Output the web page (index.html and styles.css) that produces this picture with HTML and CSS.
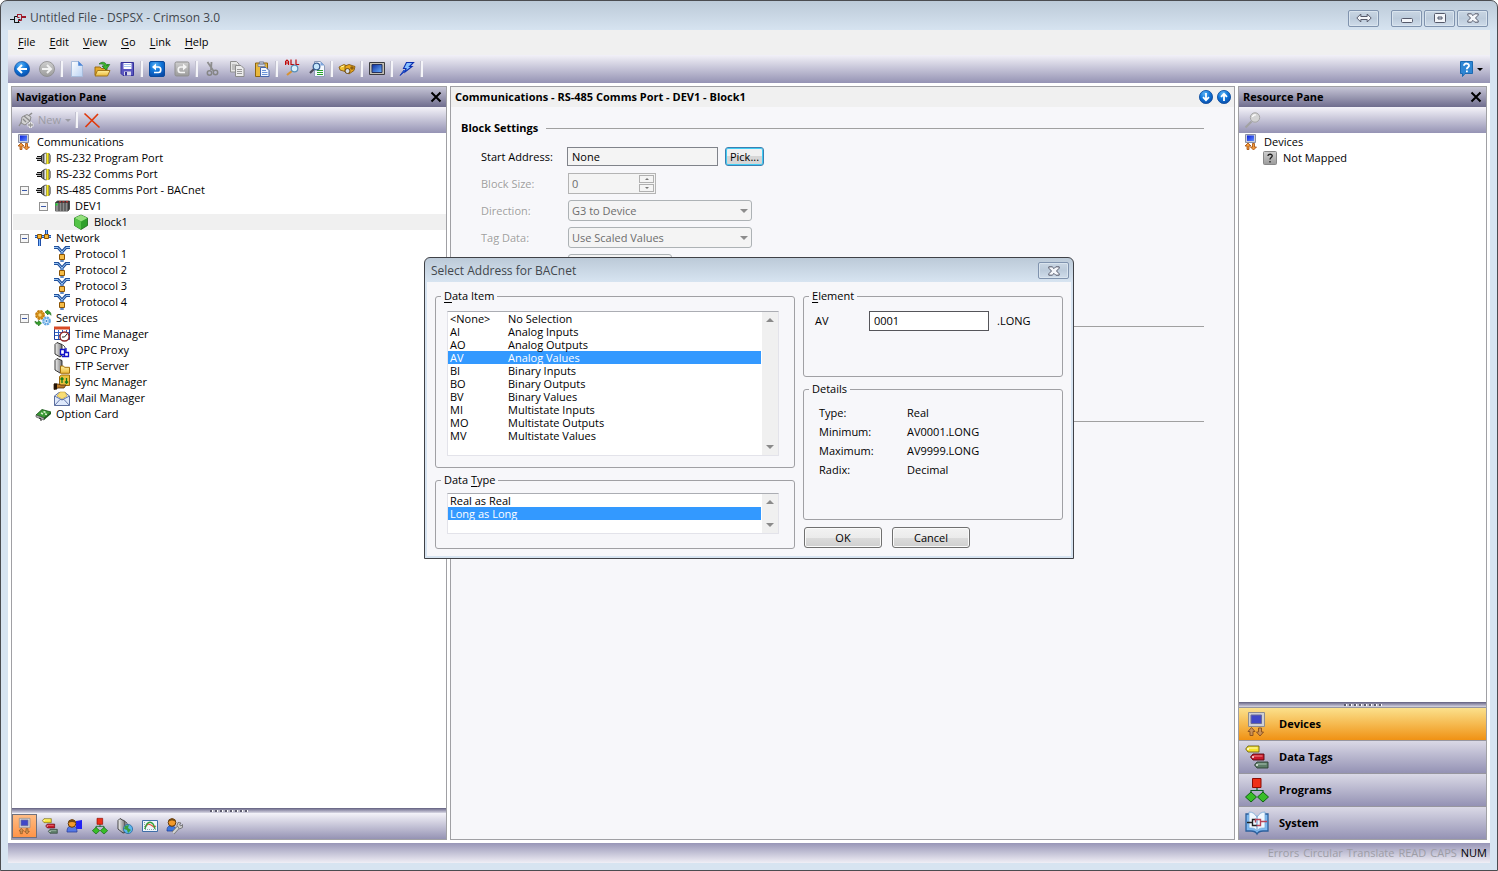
FILE: index.html
```html
<!DOCTYPE html>
<html lang="en">
<head>
<meta charset="utf-8">
<title>Untitled File - DSPSX - Crimson 3.0</title>
<link rel="stylesheet" href="styles.css">
</head>
<body>
<svg class="defs" aria-hidden="true">
  <defs>
    <radialGradient id="gBlue" cx=".4" cy=".25" r=".8"><stop offset="0" stop-color="#5db4f5"/><stop offset=".5" stop-color="#0f74d8"/><stop offset="1" stop-color="#0a4aa6"/></radialGradient>
    <linearGradient id="gGrey" x2="0" y2="1"><stop offset="0" stop-color="#cfcfcf"/><stop offset="1" stop-color="#9b9b9b"/></linearGradient>
    <linearGradient id="gScreen" x2="1" y2="1"><stop offset="0" stop-color="#0a1fd8"/><stop offset="1" stop-color="#5f8cff"/></linearGradient>
    <linearGradient id="gFolder" x2="0" y2="1"><stop offset="0" stop-color="#fff0a0"/><stop offset="1" stop-color="#eab83a"/></linearGradient>
    <linearGradient id="gPaper" x2="1" y2="1"><stop offset="0" stop-color="#ffffff"/><stop offset="1" stop-color="#b9d2f4"/></linearGradient>
    <linearGradient id="gMonitor" x2="1" y2="1"><stop offset="0" stop-color="#0c2c9c"/><stop offset="1" stop-color="#6cb2ff"/></linearGradient>
    <linearGradient id="gServer" x2="1" y2="0"><stop offset="0" stop-color="#f4f4f4"/><stop offset="1" stop-color="#777"/></linearGradient>
  </defs>
  <symbol id="i-app" viewBox="0 0 16 16"><path d="M0 9.500h5M9.500 12.500h-5v-6h3M4.500 12.500h4v-3h2" fill="none" stroke="#111"/><path d="M7 4.500h4.500v6H8M7.500 4.500v3h2M11 6.500h5M11 7.500h5" fill="none" stroke="#a01828"/></symbol>
  <symbol id="i-back" viewBox="0 0 16 16"><circle cx="8" cy="8" r="7.600" fill="url(#gBlue)" stroke="#0b4a9c" stroke-width=".6"/><path d="M13 8H4M8 4L4 8l4 4" fill="none" stroke="#fff" stroke-width="2"/></symbol>
  <symbol id="i-fwd" viewBox="0 0 16 16"><circle cx="8" cy="8" r="7.500" fill="url(#gGrey)" stroke="#8a8a8a" stroke-width=".8"/><path d="M3 8h9M8 4l4 4-4 4" fill="none" stroke="#f2f2f2" stroke-width="2"/></symbol>
  <symbol id="i-new" viewBox="0 0 16 16"><path d="M2.500.5h7l4 4v11h-11z" fill="url(#gPaper)" stroke="#a8bddc"/><path d="M9.500.5v4h4z" fill="#4c86d8" stroke="#5b8fd8" stroke-width=".7"/></symbol>
  <symbol id="i-open" viewBox="0 0 16 16"><path d="M1 6h5l1.500 1.500H13V14H1z" fill="#e5a92a" stroke="#94650a" stroke-width=".9"/><path d="M3.500 9.500H16L13.500 15H1z" fill="url(#gFolder)" stroke="#9a6d12" stroke-width=".9"/><path d="M5 3c3-3 7-2 8 2V3.500h2.700L12 9 8 5h2.300C10 3.500 8 2.500 5 3z" fill="#3bb52e" stroke="#17701a" stroke-width=".7"/></symbol>
  <symbol id="i-save" viewBox="0 0 16 16"><path d="M2 1.500h12.500v13H4L2 12.500z" fill="#5a56c0" stroke="#35329a"/><path d="M4.500 2h8v6h-8z" fill="#fff"/><path d="M5 3.500h7M5 5.500h7" stroke="#a9c3ee"/><path d="M5 10.500h7v4H5z" fill="#d8d8e8"/><path d="M6 11h2v3.500H6z" fill="#35329a"/></symbol>
  <symbol id="i-undo" viewBox="0 0 16 16"><rect x=".5" y=".5" width="15" height="15" rx="1.500" fill="url(#gBlue)" stroke="#0a4b9e"/><path d="M5 6h4.500c3 0 3 5.500 0 5.500H5" fill="none" stroke="#fff" stroke-width="1.700"/><path d="M7 2.500V9.500L3 6z" fill="#fff"/></symbol>
  <symbol id="i-redo" viewBox="0 0 16 16"><rect x="1" y="1" width="14" height="14" rx="1.500" fill="url(#gGrey)" stroke="#8f8f8f"/><path d="M11 6H6.500c-3 0-3 5.500 0 5.500H11" fill="none" stroke="#f5f5f5" stroke-width="1.700"/><path d="M9 2.500V9.500L13 6z" fill="#f5f5f5"/></symbol>
  <symbol id="i-cut" viewBox="0 0 16 16"><path d="M3.500 1l6 9M7.500 1L7 9" stroke="#8d8d8d" stroke-width="1.800" fill="none"/><circle cx="5.500" cy="12" r="2.200" fill="none" stroke="#858585" stroke-width="1.500"/><circle cx="11.500" cy="11.500" r="2.200" fill="none" stroke="#858585" stroke-width="1.500"/></symbol>
  <symbol id="i-copy" viewBox="0 0 16 16"><path d="M1.500.5h6l2.500 2.500v8H1.500z" fill="#e4e4e4" stroke="#909090"/><path d="M3 4h5M3 6h3M3 8h3" stroke="#999"/><path d="M6.500 4.500h5.500l3 3v8H6.500z" fill="#ececec" stroke="#8c8c8c"/><path d="M8 8.500h5M8 10.500h5M8 12.500h5" stroke="#999"/></symbol>
  <symbol id="i-paste" viewBox="0 0 16 16"><path d="M1.500 2h12v13.500h-12z" fill="#e9b83c" stroke="#8c6410"/><path d="M4 3h7v2.500H4z" fill="#d9dde8" stroke="#687088" stroke-width=".7"/><path d="M5.500.8h4V3h-4z" fill="#b7bccb" stroke="#687088" stroke-width=".6"/><path d="M6.500 6.500h5.500l3 3v6H6.500z" fill="#f2f7ff" stroke="#4666ae"/><path d="M8 9.500h4M8 11.500h5.500M8 13.500h5.500" stroke="#6b93d8"/></symbol>
  <symbol id="i-findall" viewBox="0 0 16 18"><g fill="none" stroke="#c00808" stroke-width="1.200"><path d="M1.600 5V1.500L3 0l1.500 1.500V5M1.600 3h3M7-.5v5h3.200M12-.5v5h3.200"/></g><path d="M3 15l5-4" stroke="#d79232" stroke-width="2.200"/><circle cx="10.500" cy="8.500" r="3.300" fill="#d8f0fb" stroke="#5a90b8" stroke-width="1.200"/></symbol>
  <symbol id="i-finddoc" viewBox="0 0 16 16"><path d="M5.500.5h6l4 4v11h-10z" fill="#f6f9ff" stroke="#8e9cb8"/><path d="M11.500.5v4h4z" fill="#7da6e0"/><path d="M8 9.500h6M8 11.500h6M8 13.500h6" stroke="#28a428" stroke-width="1.200"/><path d="M1 12l4-4" stroke="#4b4b5a" stroke-width="2.200"/><circle cx="7.500" cy="5.500" r="3.300" fill="#c6e6fa" stroke="#3a5f94" stroke-width="1.300"/></symbol>
  <symbol id="i-binoc" viewBox="0 0 16 16"><path d="M0 6l5-2.500L10 6l-4 4.500L1 9z" fill="#f0c030" stroke="#7c5006" stroke-width=".8"/><path d="M6 5l4-1.500 6 2-1 4-5 3.500-4-3z" fill="#e7a51e" stroke="#7c5006" stroke-width=".8"/><circle cx="8.500" cy="10" r="2.500" fill="#d4dbe8" stroke="#6b4609"/><circle cx="13" cy="7" r="1.800" fill="#8c5f10"/><path d="M2 6l3-1" stroke="#fff3a8"/></symbol>
  <symbol id="i-monitor" viewBox="0 0 16 16"><path d="M.5 1.500h15v12H.5z" fill="#c4c0b4" stroke="#3c3c40"/><path d="M3 3.500h10v8H3z" fill="url(#gMonitor)" stroke="#26305c"/></symbol>
  <symbol id="i-bolt" viewBox="0 0 16 16"><path d="M7.500 1.500h7l-4 4H13L6 11l1-3.500H4.500z" fill="#86c0ff" stroke="#0c2fb0" stroke-width="1.100"/><path d="M7.500 9L1 14.500 5 9" fill="#2462d8" stroke="#0c2fb0" stroke-width=".8"/></symbol>
  <symbol id="i-help" viewBox="0 0 16 16"><path d="M1.500.5h12v12H6l-2.500 3v-3h-2z" fill="#2f86d4" stroke="#1c69b0"/><path d="M5 4.700C5 1.500 10.500 2 10 5c-.2 1.200-2.200 1.500-2.200 3.300" fill="none" stroke="#fff" stroke-width="1.800"/><path d="M7 9.500h1.800v1.700H7z" fill="#fff"/></symbol>
  <symbol id="i-plug" viewBox="0 0 16 16"><path d="M14 1l-3 2.500" stroke="#8c8c8c" stroke-width="1.500"/><path d="M4 5l5-2.500L13 5l-1 4-5 4-4-2z" fill="#d2d2d2" stroke="#8c8c8c"/><path d="M6 4l6 5M3.500 10L1 14M5 7l3 3" stroke="#8c8c8c" stroke-width="1.300" fill="none"/><path d="M12.500 10v6M9.500 13h6" stroke="#f0f0f0" stroke-width="3"/><path d="M12.500 10.500v5M10 13h5" stroke="#999" stroke-width="1.400"/></symbol>
  <symbol id="i-delete" viewBox="0 0 16 16"><path d="M.5 1.500l15 14M14 2L1.500 15" stroke="#e03a0c" stroke-width="1.700" fill="none"/></symbol>
  <symbol id="i-x" viewBox="0 0 12 12"><path d="M1.500 1.500l9 9M10.500 1.500l-9 9" stroke="#000" stroke-width="2"/></symbol>
  <symbol id="i-comms" viewBox="0 0 16 16"><path d="M2.500.5h10v8h-10z" fill="#c9cfe0" stroke="#8b90a4"/><path d="M4 1.500h7v5.500H4z" fill="url(#gScreen)"/><path d="M5 9L2 12h2v3.500h2V12h2zM10.500 16l3-3h-2V9.500h-2V13h-2z" fill="#f19a3c" stroke="#a44c08" stroke-width=".8"/></symbol>
  <symbol id="i-port" viewBox="0 0 16 16"><path d="M2 6.500h4M1 8.500h5M2 10.500h4" stroke="#111"/><path d="M1 7.500h5M2 9.500h4" stroke="#b8b8b8"/><path d="M6.500 5.500L9 4v9l-2.500-1.500z" fill="#999" stroke="#222"/><path d="M9 3.500L11.500 3v11L9 13.500z" fill="#e8e8e8" stroke="#444" stroke-width=".8"/><path d="M11.500 3h2.700v11h-2.700z" fill="#f5e71c"/><path d="M14 3.500l1.300 2v6L14 13.500z" fill="#bbb" stroke="#444" stroke-width=".7"/></symbol>
  <symbol id="i-device" viewBox="0 0 16 16"><path d="M1.500 4.500L3.500 3h12v8l-1.500 2H1.500z" fill="#3c3c3c" stroke="#333" stroke-width=".8"/><path d="M1.500 5h3v8h-3zM5.500 5h2v8h-2zM8.500 5h2v8h-2zM11.500 5h2v8h-2z" fill="#8c8c8c"/><path d="M1.500 5.500h2v2h-2z" fill="#14e02a"/><path d="M5 3.800h2M8.500 3.800h2M12 3.800h2" stroke="#e23636"/></symbol>
  <symbol id="i-cube" viewBox="0 0 16 16"><path d="M8 1l6.500 3v7.500L8 15.500l-6.500-4V4z" fill="#2fa02c" stroke="#176316" stroke-width=".8"/><path d="M8 1l6.500 3L8 7.500 1.500 4z" fill="#93e07c"/><path d="M1.500 4L8 7.500v8l-6.500-4z" fill="#54c447"/></symbol>
  <symbol id="i-network" viewBox="0 0 16 16"><path d="M0 6.500h16M4.500 7v9M11.500 0v7" stroke="#1f4fa8" stroke-width="3"/><path d="M0 6.500h16M4.500 7v9M11.500 0v7" stroke="#7db8ff" stroke-width="1"/><path d="M2.500 4.500h4v4h-4zM9.500 4.500h4v4h-4z" fill="#f6b93a" stroke="#8c5404"/></symbol>
  <symbol id="i-protocol" viewBox="0 0 16 16"><path d="M0 1.500h4L8 6l4-4.500h4M8 6v10" fill="none" stroke="#1f4f9c" stroke-width="3"/><path d="M0 1.500h4L8 6l4-4.500h4M8 6v10" fill="none" stroke="#9cc8f4"/><path d="M5.500 8.500h5v5h-5z" fill="#f6bd48" stroke="#8c5404"/></symbol>
  <symbol id="i-services" viewBox="0 0 16 16"><circle cx="5" cy="5" r="3.600" fill="#f6d478" stroke="#c47c0a" stroke-width="2.600" stroke-dasharray="2.200 .6"/><circle cx="5" cy="5" r="2.600" fill="none" stroke="#d18b14" stroke-width="1.800"/><circle cx="11.500" cy="11" r="3.200" fill="#e4f3ff" stroke="#67a9e4" stroke-width="2.400" stroke-dasharray="2 .5"/><circle cx="11.500" cy="11" r="1" fill="#3f88cc"/><path d="M10 2l3-2v1.300c2 0 3 1.500 3 4-1-1.500-2-1.800-3-1.500V5zM6.500 13l-3 3v-1.500c-2 0-3.500-1-3.500-3.500 1 1.200 2 1.300 3.500 1V10.500z" fill="#36a02c" stroke="#156813" stroke-width=".6"/></symbol>
  <symbol id="i-time" viewBox="0 0 16 16"><path d="M.5 1.500h15v12H.5z" fill="#fff" stroke="#1c3f9c"/><path d="M0 .5h16v3H0z" fill="#d84a26"/><path d="M1 6.500h14M1 9.500h14M4.500 4v9M8.500 4v9M12.500 4v9" stroke="#3264c4"/><circle cx="10.500" cy="10.500" r="4.600" fill="#fff" stroke="#912828" stroke-width="1.500"/><path d="M13 8l-2.500 3H8" stroke="#222" fill="none"/></symbol>
  <symbol id="i-opc" viewBox="0 0 16 16"><path d="M1 2.500L3 .5l5 2v11L6 15l-5-3z" fill="url(#gServer)" stroke="#222" stroke-width=".9"/><path d="M8.500 2.500L11 5v6" fill="none" stroke="#555"/><path d="M6.500 7.500h4v5h-4zM10.500 10.500h4v4h-4zM8 14.500h5M12 6v5" fill="#fff" stroke="#1111c8" stroke-width="1.300"/></symbol>
  <symbol id="i-ftp" viewBox="0 0 16 16"><path d="M1 2.500L3 .5l5 2v11L6 15l-5-3z" fill="url(#gServer)" stroke="#222" stroke-width=".9"/><path d="M6.500 8h3l1 1.300H15.500v6h-9z" fill="url(#gFolder)" stroke="#a4700a"/></symbol>
  <symbol id="i-sync" viewBox="0 0 16 16"><path d="M5.500 2.500l2-1.500h8v10.500h-10z" fill="#ecc23c" stroke="#9c6a0a"/><path d="M8 9V4M6.500 5.500L8 3.800l1.500 1.700M12.500 4v5M11 7.500l1.500 1.700L14 7.500" stroke="#187c18" fill="none" stroke-width="1.300"/><path d="M0 10h4l3 1h5l-2 3H4l-4 1.500z" fill="#be7c28" stroke="#4c2c06" stroke-width=".8"/><path d="M0 9.500h3v6H0z" fill="#241408"/></symbol>
  <symbol id="i-mail" viewBox="0 0 16 16"><path d="M.5 6L5 2.500h6L15.500 6v9.500H.5z" fill="#dfe9fb" stroke="#5c6f9f"/><path d="M3 6l3-4h5l2 4-5 3z" fill="#f8dd74" stroke="#c79e2c" stroke-width=".6"/><path d="M.5 6L8 10l7.500-4M.5 15.500L6 9.500h4l5.500 6" fill="none" stroke="#6478aa"/></symbol>
  <symbol id="i-card" viewBox="0 0 16 16"><path d="M1 9l6-5.500 9 2.500-7 6z" fill="#3a9a35" stroke="#134e12" stroke-width=".8"/><path d="M1 9l8 3v2L1 11z" fill="#b8b8b8" stroke="#444" stroke-width=".6"/><path d="M9 12l7-6v2l-7 6z" fill="#1b5b1a"/><path d="M6 7l2 1M8.500 5.500l2 1M10 8l2 .5" stroke="#d4f0c8" stroke-width="1.400"/><path d="M4 12l2 1v2" stroke="#222" fill="none"/></symbol>
  <symbol id="i-tags" viewBox="0 0 24 24"><g stroke-width=".9"><path d="M3 1h11v6H3L.7 4z" fill="#f5e22c" stroke="#6d6010"/><path d="M8 9h11v6H8L5.500 12z" fill="#c81a2c" stroke="#5a0810"/><path d="M12 17h11v6H12l-2.500-3z" fill="#5d7d68" stroke="#2b3f32"/></g><path d="M3.500 3h9" stroke="#fffbb8"/><path d="M8.500 11h9" stroke="#f08c8c"/><path d="M12.500 19h9" stroke="#a9c4b2"/><circle cx="3" cy="4" r=".9" fill="#fff"/><circle cx="8" cy="12" r=".9" fill="#fff"/><circle cx="12" cy="20" r=".9" fill="#fff"/></symbol>
  <symbol id="i-programs" viewBox="0 0 24 24"><path d="M12 9v4M6 16v-3.500h12V16" fill="none" stroke="#0d5f24" stroke-width="1.200"/><path d="M7.500.5h8.500v9H7.500z" fill="#ee3018" stroke="#8c0c04"/><path d="M6 14l5.500 5L6 24 .5 19zM18 14l5.500 5-5.500 5-5.500-5z" fill="#38be28" stroke="#0f6410"/></symbol>
  <symbol id="i-system" viewBox="0 0 24 24"><path d="M1 3h4c3 0 5 1 7 4 2-3 4-4 7-4h4v17h-5c-3 0-5 1-6 3-1-2-3-3-6-3H1z" fill="#7db8f0" stroke="#2c5f9c" stroke-width="1.300"/><path d="M4 1c4 0 6 2 8 5v14c-2-3-4-3-8-3zM20 1c-4 0-6 2-8 5v14c2-3 4-3 8-3z" fill="#f0f8ff" stroke="#79a9d8" stroke-width=".8"/><path d="M2 11.500h5M12 14.500H7.500v-6H11" fill="none" stroke="#222" stroke-width="1.400"/><path d="M10.500 11.500v-3h5v6h-4M16 10.500h6" fill="none" stroke="#b84458" stroke-width="1.400"/></symbol>
  <symbol id="i-devices" viewBox="0 0 24 24"><path d="M3.500.5h16v14h-16z" fill="#d0d0d4" stroke="#8c8c90"/><path d="M6 3h10.500v8.500H6z" fill="#4048c8" stroke="#6c6c98"/><path d="M6.500 15.500L3 19.500h2v4h3v-4h2zM15 24l3.500-4h-2v-4h-3v4h-2z" fill="#cc9256" stroke="#8e5420"/></symbol>
  <symbol id="i-user" viewBox="0 0 16 16"><path d="M9 3l6-1v9H9z" fill="#2222f4"/><path d="M0 14c0-5 2-6 5-6s5 1 5 6z" fill="#5478e4" stroke="#2b3f9c" stroke-width=".8"/><circle cx="5" cy="5.500" r="3.800" fill="#f39a2a" stroke="#60380a"/><path d="M1.200 5C1.500 1 8.500 0 8.800 5 6.500 3.500 3.500 3.500 1.200 5z" fill="#754a10"/></symbol>
  <symbol id="i-web" viewBox="0 0 16 16"><path d="M1 2.500L3 .5l5 3v11L6 15l-5-4z" fill="url(#gServer)" stroke="#333" stroke-width=".9"/><path d="M6 2l4 3v4" stroke="#555" fill="none"/><circle cx="11" cy="11" r="4.600" fill="#5cb4ee" stroke="#28699c" stroke-width=".8"/><path d="M8 8l4-1-1 3 3 2-3 3-1-3-3-1z" fill="#3ba03a"/></symbol>
  <symbol id="i-chart" viewBox="0 0 16 16"><path d="M.5 2.500h15v11H.5z" fill="#eef5fb" stroke="#3f6ea8"/><path d="M2.500 4v7.500H14" stroke="#8aa" stroke-dasharray="1 1" fill="none"/><path d="M3 9l3-3 3 1 3 2 2-1" fill="none" stroke="#e2543c" stroke-width="1.200"/><path d="M3 11c2-9 8-9 10 0" fill="none" stroke="#35a038" stroke-width="1.300"/></symbol>
  <symbol id="i-usertool" viewBox="0 0 16 16"><path d="M0 13c0-4 1-5 4-5s5 1 5 5z" fill="#3e78dc" stroke="#20409c" stroke-width=".8"/><circle cx="5" cy="4.500" r="3.800" fill="#f39a2a" stroke="#60380a"/><path d="M1.200 4C1.500 0 8.500-1 8.800 4 6.500 2 3.500 2 1.200 4z" fill="#754a10"/><path d="M6 15l6-6.500" stroke="#777" stroke-width="3.500"/><path d="M6 15l6-6.500" stroke="#d4d4d4" stroke-width="2"/><path d="M10 7.500l1-3 3 .5-1.500 2 1.500 1 1.500-1.500v3L12.500 11z" fill="#ccc" stroke="#666" stroke-width=".8"/></symbol>
  <symbol id="i-down" viewBox="0 0 14 14"><circle cx="7" cy="7" r="6.600" fill="url(#gBlue)" stroke="#0b4a9c" stroke-width=".8"/><path d="M7 3v7M4 7.200l3 3 3-3" fill="none" stroke="#fff" stroke-width="1.800"/></symbol>
  <symbol id="i-up" viewBox="0 0 14 14"><circle cx="7" cy="7" r="6.600" fill="url(#gBlue)" stroke="#0b4a9c" stroke-width=".8"/><path d="M7 11V4M4 6.800l3-3 3 3" fill="none" stroke="#fff" stroke-width="1.800"/></symbol>
  <symbol id="i-search" viewBox="0 0 16 16"><path d="M.5 15.500l6-6" stroke="#a2a2a2" stroke-width="2.200"/><circle cx="10" cy="5.500" r="4.700" fill="#d4d4d4" stroke="#a5a5a5"/><path d="M7.500 5c.5-2 2-2.500 3.500-2" stroke="#fff" stroke-width="1.300" fill="none"/></symbol>
  <symbol id="i-unmapped" viewBox="0 0 16 16"><rect x="1.500" y="1.500" width="13" height="13" rx="1" fill="url(#gGrey)" stroke="#888"/><path d="M6 6c0-2.500 4.500-2.200 4.200 0C10 7.500 8 7.500 8 9.500M8 11v1.500" fill="none" stroke="#1c1c1c" stroke-width="1.300"/></symbol>
  <symbol id="i-wx" viewBox="0 0 12 10"><path d="M.8.800h3.400L6 2.600 7.800.800h3.400v1.400L8.500 5l2.700 2.800v1.400H7.800L6 7.400 4.200 9.200H.8V7.800L3.500 5 .8 2.200z" fill="#f4f6fa" stroke="#55596a"/></symbol>
  <symbol id="i-wmin" viewBox="0 0 12 10"><rect x=".5" y="5.500" width="11" height="4" rx="1" fill="#f4f6fa" stroke="#55596a"/></symbol>
  <symbol id="i-wmax" viewBox="0 0 12 10"><rect x=".5" y=".5" width="11" height="9" rx="1" fill="#f4f6fa" stroke="#55596a"/><path d="M4 4h4v2H4z" fill="#cdd9e6" stroke="#55596a"/></symbol>
  <symbol id="i-warr" viewBox="0 0 16 10"><path d="M.8 5l4-4v2.500h6.400V1l4 4-4 4V6.500H4.800V9z" fill="#f4f6fa" stroke="#55596a"/></symbol>
</svg>

<div class="window">
  <header class="titlebar">
    <svg class="i16"><use href="#i-app"/></svg>
    <h1 class="title">Untitled File - DSPSX - Crimson 3.0</h1>
    <button class="wbtn wbtn-first" aria-label="Switch display"><svg class="warr"><use href="#i-warr"/></svg></button>
    <button class="wbtn" aria-label="Minimize"><svg class="wicon"><use href="#i-wmin"/></svg></button>
    <button class="wbtn" aria-label="Maximize"><svg class="wicon"><use href="#i-wmax"/></svg></button>
    <button class="wbtn" aria-label="Close"><svg class="wicon"><use href="#i-wx"/></svg></button>
  </header>

  <div class="client">
    <nav class="menubar">
      <button><u>F</u>ile</button><button><u>E</u>dit</button><button><u>V</u>iew</button><button><u>G</u>o</button><button><u>L</u>ink</button><button><u>H</u>elp</button>
    </nav>
    <div class="toolbar" role="toolbar" aria-label="Main">
      <button class="tool" aria-label="Back"><svg class="i16"><use href="#i-back"/></svg></button>
      <button class="tool" aria-label="Forward"><svg class="i16"><use href="#i-fwd"/></svg></button>
      <span class="sep"></span>
      <button class="tool" aria-label="New"><svg class="i16"><use href="#i-new"/></svg></button>
      <button class="tool" aria-label="Open"><svg class="i16"><use href="#i-open"/></svg></button>
      <button class="tool" aria-label="Save"><svg class="i16"><use href="#i-save"/></svg></button>
      <span class="sep"></span>
      <button class="tool" aria-label="Undo"><svg class="i16"><use href="#i-undo"/></svg></button>
      <button class="tool" aria-label="Redo"><svg class="i16"><use href="#i-redo"/></svg></button>
      <span class="sep"></span>
      <button class="tool" aria-label="Cut"><svg class="i16"><use href="#i-cut"/></svg></button>
      <button class="tool" aria-label="Copy"><svg class="i16"><use href="#i-copy"/></svg></button>
      <button class="tool" aria-label="Paste"><svg class="i16"><use href="#i-paste"/></svg></button>
      <span class="sep"></span>
      <button class="tool" aria-label="Find all"><svg class="i16 tall"><use href="#i-findall"/></svg></button>
      <button class="tool" aria-label="Find in document"><svg class="i16"><use href="#i-finddoc"/></svg></button>
      <span class="sep"></span>
      <button class="tool" aria-label="Browse"><svg class="i16"><use href="#i-binoc"/></svg></button>
      <span class="sep"></span>
      <button class="tool" aria-label="Display"><svg class="i16"><use href="#i-monitor"/></svg></button>
      <span class="sep"></span>
      <button class="tool" aria-label="Download"><svg class="i16"><use href="#i-bolt"/></svg></button>
      <span class="sep"></span>
      <button class="help" aria-label="Help"><svg class="i16"><use href="#i-help"/></svg><span class="caret"></span></button>
    </div>

    <main class="panes">
      <section class="pane">
        <div class="pane-head"><h2>Navigation Pane</h2><button class="close" aria-label="Close pane"><svg class="i12"><use href="#i-x"/></svg></button></div>
        <div class="subbar">
          <button class="newbtn" disabled><svg class="i16"><use href="#i-plug"/></svg>New<span class="caret"></span></button>
          <span class="sep"></span>
          <button class="tool" aria-label="Delete"><svg class="i16"><use href="#i-delete"/></svg></button>
        </div>
        <ul class="tree" role="tree">
          <li class="l0" role="treeitem"><svg class="i16"><use href="#i-comms"/></svg>Communications</li>
          <li class="l1" role="treeitem"><span class="slot"></span><svg class="i16"><use href="#i-port"/></svg>RS-232 Program Port</li>
          <li class="l1" role="treeitem"><span class="slot"></span><svg class="i16"><use href="#i-port"/></svg>RS-232 Comms Port</li>
          <li class="l1" role="treeitem"><span class="slot"><button class="toggle" aria-label="Collapse"></button></span><svg class="i16"><use href="#i-port"/></svg>RS-485 Comms Port - BACnet</li>
          <li class="l2" role="treeitem"><span class="slot"><button class="toggle" aria-label="Collapse"></button></span><svg class="i16"><use href="#i-device"/></svg>DEV1</li>
          <li class="l3 current" role="treeitem" aria-selected="true"><span class="slot"></span><svg class="i16"><use href="#i-cube"/></svg>Block1</li>
          <li class="l1" role="treeitem"><span class="slot"><button class="toggle" aria-label="Collapse"></button></span><svg class="i16"><use href="#i-network"/></svg>Network</li>
          <li class="l2" role="treeitem"><span class="slot"></span><svg class="i16"><use href="#i-protocol"/></svg>Protocol 1</li>
          <li class="l2" role="treeitem"><span class="slot"></span><svg class="i16"><use href="#i-protocol"/></svg>Protocol 2</li>
          <li class="l2" role="treeitem"><span class="slot"></span><svg class="i16"><use href="#i-protocol"/></svg>Protocol 3</li>
          <li class="l2" role="treeitem"><span class="slot"></span><svg class="i16"><use href="#i-protocol"/></svg>Protocol 4</li>
          <li class="l1" role="treeitem"><span class="slot"><button class="toggle" aria-label="Collapse"></button></span><svg class="i16"><use href="#i-services"/></svg>Services</li>
          <li class="l2" role="treeitem"><span class="slot"></span><svg class="i16"><use href="#i-time"/></svg>Time Manager</li>
          <li class="l2" role="treeitem"><span class="slot"></span><svg class="i16"><use href="#i-opc"/></svg>OPC Proxy</li>
          <li class="l2" role="treeitem"><span class="slot"></span><svg class="i16"><use href="#i-ftp"/></svg>FTP Server</li>
          <li class="l2" role="treeitem"><span class="slot"></span><svg class="i16"><use href="#i-sync"/></svg>Sync Manager</li>
          <li class="l2" role="treeitem"><span class="slot"></span><svg class="i16"><use href="#i-mail"/></svg>Mail Manager</li>
          <li class="l1" role="treeitem"><span class="slot"></span><svg class="i16"><use href="#i-card"/></svg>Option Card</li>
        </ul>
        <div class="splitter"><span class="grip"></span></div>
        <div class="subbar catbar">
          <button class="tool on" aria-label="Communications"><svg class="i16"><use href="#i-devices"/></svg></button>
          <button class="tool" aria-label="Data Tags"><svg class="i16"><use href="#i-tags"/></svg></button>
          <button class="tool" aria-label="Display Pages"><svg class="i16"><use href="#i-user"/></svg></button>
          <button class="tool" aria-label="Programs"><svg class="i16"><use href="#i-programs"/></svg></button>
          <button class="tool" aria-label="Web Server"><svg class="i16"><use href="#i-web"/></svg></button>
          <button class="tool" aria-label="Data Logger"><svg class="i16"><use href="#i-chart"/></svg></button>
          <button class="tool" aria-label="Security"><svg class="i16"><use href="#i-usertool"/></svg></button>
        </div>
      </section>

      <section class="pane editor">
        <div class="editor-head"><h2>Communications - RS-485 Comms Port - DEV1 - Block1</h2>
          <button class="round" aria-label="Next"><svg class="i14"><use href="#i-down"/></svg></button>
          <button class="round" aria-label="Previous"><svg class="i14"><use href="#i-up"/></svg></button>
        </div>
        <form class="settings">
          <div class="group-title"><h3>Block Settings</h3></div>
          <div class="fields">
            <div class="field"><label for="addr">Start Address:</label><input id="addr" class="box addr" value="None" readonly><button type="button" class="pick">Pick...</button></div>
            <div class="field off"><label for="size">Block Size:</label><span class="spin"><input id="size" value="0" disabled><span class="spin-btns"><button type="button" class="up" aria-label="Increase" disabled></button><button type="button" class="down" aria-label="Decrease" disabled></button></span></span></div>
            <div class="field off"><label for="dir">Direction:</label><span class="drop"><select id="dir" disabled><option>G3 to Device</option></select></span></div>
            <div class="field off"><label for="data">Tag Data:</label><span class="drop"><select id="data" disabled><option>Use Scaled Values</option></select></span></div>
            <div class="field off"><span></span><span class="drop short"><select aria-label="Setting" disabled></select></span></div>
          </div>
          <div class="rule rule-a"></div>
          <div class="rule rule-b"></div>
        </form>
      </section>

      <section class="pane">
        <div class="pane-head"><h2>Resource Pane</h2><button class="close" aria-label="Close pane"><svg class="i12"><use href="#i-x"/></svg></button></div>
        <div class="subbar"><button class="tool" aria-label="Search" disabled><svg class="i16"><use href="#i-search"/></svg></button></div>
        <ul class="tree" role="tree">
          <li class="l0" role="treeitem"><svg class="i16"><use href="#i-comms"/></svg>Devices</li>
          <li class="l1" role="treeitem"><span class="slot"></span><svg class="i16"><use href="#i-unmapped"/></svg>Not Mapped</li>
        </ul>
        <div class="splitter"><span class="grip"></span></div>
        <div class="cats">
          <button class="cat on"><svg class="i24"><use href="#i-devices"/></svg>Devices</button>
          <button class="cat"><svg class="i24"><use href="#i-tags"/></svg>Data Tags</button>
          <button class="cat"><svg class="i24"><use href="#i-programs"/></svg>Programs</button>
          <button class="cat"><svg class="i24"><use href="#i-system"/></svg>System</button>
        </div>
      </section>
    </main>
    <footer class="status"><span>Errors</span><span>Circular</span><span>Translate</span><span>READ</span><span>CAPS</span><span class="lit">NUM</span></footer>
  </div>
</div>

<div class="overlay">
  <div class="dialog" role="dialog" aria-labelledby="dlg-title">
    <header class="dialog-title"><h2 id="dlg-title">Select Address for BACnet</h2><button class="wbtn" aria-label="Close"><svg class="wicon"><use href="#i-wx"/></svg></button></header>
    <div class="dialog-body">
      <div class="col">
        <fieldset class="fs-item">
          <legend><u>D</u>ata Item</legend>
          <div class="listbox">
            <ul role="listbox" aria-label="Data Item">
              <li role="option"><span>&lt;None&gt;</span>No Selection</li>
              <li role="option"><span>AI</span>Analog Inputs</li>
              <li role="option"><span>AO</span>Analog Outputs</li>
              <li role="option" class="sel" aria-selected="true"><span>AV</span>Analog Values</li>
              <li role="option"><span>BI</span>Binary Inputs</li>
              <li role="option"><span>BO</span>Binary Outputs</li>
              <li role="option"><span>BV</span>Binary Values</li>
              <li role="option"><span>MI</span>Multistate Inputs</li>
              <li role="option"><span>MO</span>Multistate Outputs</li>
              <li role="option"><span>MV</span>Multistate Values</li>
            </ul>
            <div class="scroll"><i class="tri up"></i><i class="tri down"></i></div>
          </div>
        </fieldset>
        <fieldset class="fs-type">
          <legend>Data <u>T</u>ype</legend>
          <div class="listbox small">
            <ul role="listbox" aria-label="Data Type">
              <li role="option">Real as Real</li>
              <li role="option" class="sel" aria-selected="true">Long as Long</li>
            </ul>
            <div class="scroll"><i class="tri up"></i><i class="tri down"></i></div>
          </div>
        </fieldset>
      </div>
      <div class="col">
        <fieldset class="fs-elem">
          <legend><u>E</u>lement</legend>
          <div class="elem"><label for="elem">AV</label><input id="elem" class="elem-input" value="0001"><span>.LONG</span></div>
        </fieldset>
        <fieldset class="fs-details">
          <legend>Details</legend>
          <dl class="details"><dt>Type:</dt><dd>Real</dd><dt>Minimum:</dt><dd>AV0001.LONG</dd><dt>Maximum:</dt><dd>AV9999.LONG</dd><dt>Radix:</dt><dd>Decimal</dd></dl>
        </fieldset>
        <div class="actions"><button class="push">OK</button><button class="push">Cancel</button></div>
      </div>
    </div>
  </div>
</div>
</body>
</html>
```

FILE: styles.css
```css
* { box-sizing: border-box; }
body { margin: 0; background: #fff; color: #000; font: 11px/16px "Open Sans", "Noto Sans", sans-serif; }
h1, h2, h3, ul, dl, dd { margin: 0; padding: 0; font-size: 11px; list-style: none; }
button, input, select { font: inherit; color: inherit; margin: 0; padding: 0; }
button { border: 0; background: none; }
svg { display: block; flex: none; overflow: visible; }
symbol { overflow: visible; }
.defs { position: absolute; width: 0; height: 0; }
.i12 { width: 12px; height: 12px; }
.i14 { width: 14px; height: 14px; }
.i16 { width: 16px; height: 16px; }
.i24 { width: 24px; height: 24px; }
.tall { height: 18px; }

/* Main window frame */
.window { display: flex; flex-direction: column; height: 100vh; min-height: 640px; padding: 0 7px 7px; border: 1px solid #4b4c50; border-radius: 7px 7px 0 0; background: linear-gradient(#bccad8, #d7e4f1 30px); }
.titlebar { display: flex; align-items: center; height: 29px; padding: 5px 2px 0; }
.title { flex: 1; margin-left: 4px; font-size: 12px; font-weight: 400; color: #42474d; }
.wbtn { display: flex; align-items: center; justify-content: center; width: 31px; height: 17px; margin-left: 2px; border: 1px solid #8093ae; border-radius: 2px; background: linear-gradient(#c9d6e3, #bccbdb 50%, #cfdcea); box-shadow: inset 0 0 0 1px #d9e4ee; }
.wbtn-first { margin-right: 10px; }
.wicon { width: 12px; height: 10px; }
.warr { width: 16px; height: 10px; }
.client { flex: 1; display: flex; flex-direction: column; min-height: 0; background: #fff; }
.menubar { display: flex; align-items: center; gap: 14px; height: 25px; padding: 0 0 2px 10px; background: #f0f0f0; }
u { text-decoration-thickness: 1px; text-underline-offset: 2px; }
.toolbar { display: flex; align-items: center; height: 28px; padding-left: 1px; background: linear-gradient(#f2f1f8, #9593b4); }
.tool { display: flex; align-items: center; justify-content: center; width: 25px; height: 25px; }
.sep { display: flex; justify-content: center; width: 5px; height: 16px; }
.sep::before { content: ""; width: 2px; background: #f4f4f8; border-left: 1px solid #c2c1d0; }
.help { display: flex; align-items: center; gap: 2px; margin: 0 7px 0 auto; }
.caret { border: 3px solid transparent; border-top-color: currentColor; border-bottom: 0; }

/* Panes */
.panes { flex: 1; display: grid; grid-template-columns: 436px 1fr 249px; gap: 3px; min-height: 0; padding: 3px; }
.pane { display: flex; flex-direction: column; min-width: 0; border: 1px solid #a0a0a4; }
.pane-head { display: flex; align-items: center; justify-content: space-between; height: 20px; padding: 0 4px; background: linear-gradient(#c6c5d6, #6f6d8e); }
.subbar { display: flex; align-items: center; height: 26px; padding-left: 1px; background: linear-gradient(#f4f3f9, #9593b4); }
.newbtn { display: flex; align-items: center; gap: 4px; width: 61px; padding-left: 5px; color: #9c9ca4; }
.tree { flex: 1; min-height: 0; padding-top: 1px; background: #fff; }
.tree li { display: flex; align-items: center; height: 16px; margin-left: 1px; }
.tree li > svg { margin-right: 5px; }
.l0 { padding-left: 3px; }
.l1 { padding-left: 7px; }
.l2 { padding-left: 26px; }
.l3 { padding-left: 45px; }
.current { background: #f0f0f0; }
.slot { display: flex; width: 15px; }
.toggle { display: grid; place-items: center; width: 9px; height: 9px; border: 1px solid #919191; background: #f6f6f6; }
.toggle::before { content: ""; width: 5px; height: 1px; background: #3a58a8; }
.splitter { display: flex; align-items: center; justify-content: center; height: 5px; border-top: 1px solid #6d6b89; background: linear-gradient(#7a7896, #d8d7e4); }
.grip { width: 38px; height: 2px; background: repeating-linear-gradient(90deg, #5f5e70 0 2px, #fff 2px 3px, #b9b8c8 3px 5px); }
.catbar { padding-left: 0; }
.catbar .tool { height: 24px; }
.catbar .on { border: 1px solid #70707c; background: linear-gradient(#ffbc84, #ff9448); }
.cat { display: flex; align-items: center; gap: 10px; width: 100%; height: 33px; padding-left: 6px; border-top: 1px solid #97969f; background: linear-gradient(#dad9e6, #9492b4); font-weight: 700; }
.cat.on { background: linear-gradient(#fbe18c, #f09214); }

/* Editor */
.editor { background: #f7f7fa; }
.editor-head { display: flex; align-items: center; gap: 4px; height: 20px; padding: 0 3px 0 4px; background: #f0f0f0; }
.editor-head h2 { flex: 1; }
.settings { flex: 1; padding: 13px 30px 0 10px; }
.group-title { display: flex; align-items: center; gap: 8px; height: 16px; }
.group-title::after { content: ""; flex: 1; height: 1px; background: #a0a0a0; }
.fields { display: grid; gap: 6px; padding: 10px 0 0 20px; }
.field { display: grid; grid-template-columns: 86px auto auto; justify-content: start; align-items: center; height: 21px; }
.field.off { color: #6d6d6d; }
.off label { color: #a0a0a0; text-shadow: 1px 1px 0 #fff; }
.box { height: 19px; padding-left: 4px; border: 1px solid #80838a; background: #f4f4f4; }
.addr { width: 151px; }
.pick { width: 39px; height: 19px; margin-left: 7px; border: 1px solid #3c7fb1; border-radius: 3px; background: linear-gradient(#f0f0f0 50%, #d6d6d6 50%); box-shadow: inset 0 0 0 1px #42cdf4; }
.spin { display: flex; width: 88px; height: 21px; margin-left: 1px; padding: 1px; border: 1px solid #b4b4b4; background: #f4f4f4; }
.spin input { flex: 1; min-width: 0; padding-left: 2px; border: 0; background: none; }
.spin-btns { display: grid; width: 15px; gap: 1px; }
.spin-btns button { display: grid; place-items: center; border: 1px solid #b0b0b0; }
.spin-btns button::before { content: ""; border: 2px solid transparent; }
.spin-btns .up::before { border-bottom-color: #777; border-top: 0; }
.spin-btns .down::before { border-top-color: #777; border-bottom: 0; }
.drop { display: grid; align-items: center; width: 184px; margin-left: 1px; }
.drop select { grid-area: 1 / 1; width: 100%; height: 21px; padding-left: 3px; border: 1px solid #adb2b5; border-radius: 3px; background: #f4f4f4; color: #6d6d6d; opacity: 1; appearance: none; }
.drop::after { content: ""; grid-area: 1 / 1; justify-self: end; margin-right: 4px; border: 4px solid transparent; border-top-color: #8c8c8c; border-bottom: 0; }
.short { width: 104px; }
.rule { height: 1px; background: #a0a0a0; }
.rule-a { margin-top: 51px; }
.rule-b { margin-top: 94px; }

.status { display: flex; align-items: center; justify-content: flex-end; gap: 4px; height: 20px; padding-right: 3px; color: #9d9da6; background: linear-gradient(#9896b7, #f0eff6); }
.lit { color: #000; }

/* Dialog */
.overlay { position: absolute; inset: 0; display: flex; align-items: flex-start; justify-content: center; padding-top: 257px; pointer-events: none; }
.dialog { width: 650px; padding: 0 2px 2px; border: 1px solid #3f4146; border-radius: 6px 6px 0 0; background: linear-gradient(#bccad8, #d7e4f1 24px); pointer-events: auto; }
.dialog-title { display: flex; align-items: center; height: 24px; padding: 1px 2px 0 4px; }
.dialog-title h2 { flex: 1; font-weight: 400; color: #42474d; font-size: 12px; }
.dialog-body { display: grid; grid-template-columns: 360px 1fr; gap: 8px; padding: 7px 8px; background: #f7f7fa; }
.col { display: flex; flex-direction: column; gap: 5px; }
fieldset { min-width: 0; margin: 0; padding: 0; border: 1px solid #a0a0a4; border-radius: 3px; }
legend { margin-left: 5px; padding: 0 3px; line-height: 14px; }
.fs-item { height: 179px; }
.fs-type { height: 76px; }
.fs-elem { height: 88px; }
.fs-details { height: 138px; }
.listbox { display: flex; width: 332px; height: 145px; margin: 8px 0 0 11px; border: 1px solid #e3e3ea; border-top-color: #abadb3; background: #fff; line-height: 13px; }
.listbox.small { height: 41px; margin-top: 6px; }
.listbox ul { flex: 1; }
.listbox li { display: flex; height: 13px; padding-left: 2px; white-space: nowrap; }
.listbox li span { width: 58px; }
.listbox .sel { margin-right: 1px; background: #3399ff; color: #fff; }
.scroll { display: flex; flex-direction: column; align-items: center; justify-content: space-between; width: 16px; padding: 6px 0; background: #f0f0f0; }
.tri { border: 4px solid transparent; }
.tri.up { border-top: 0; border-bottom-color: #8a8a8a; }
.tri.down { border-bottom: 0; border-top-color: #8a8a8a; }
.elem { display: grid; grid-template-columns: 54px 120px auto; align-items: center; gap: 0; padding: 8px 0 0 11px; }
.elem span { margin-left: 8px; }
.elem-input { height: 20px; padding: 0 4px 2px; border: 1px solid #55555a; background: #fff; }
.details { display: grid; grid-template-columns: 88px 1fr; row-gap: 3px; padding: 9px 0 0 15px; }
.actions { display: flex; gap: 10px; padding: 2px 0 0 1px; }
.push { width: 78px; height: 21px; border: 1px solid #707070; border-radius: 3px; background: linear-gradient(#f2f2f2, #ebebeb 50%, #dcdcdc 50%, #cfcfcf); box-shadow: inset 0 0 0 1px #fafafa; }
```
